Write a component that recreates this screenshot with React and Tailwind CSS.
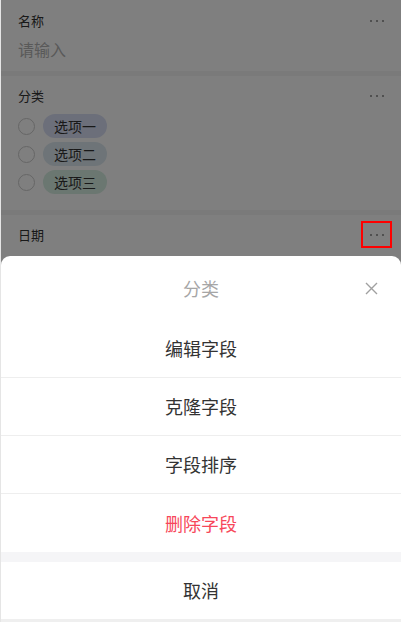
import React from "react";

function Dots({ boxed }) {
  return (
    <div className="relative flex h-[27px] w-[31px] items-center justify-center gap-[4px]">
      <span className="h-[2px] w-[2px] bg-[#a0a0a0]" />
      <span className="h-[2px] w-[2px] bg-[#a0a0a0]" />
      <span className="h-[2px] w-[2px] bg-[#a0a0a0]" />
      {boxed && <span className="absolute inset-0 z-30 border-2 border-[#ff0000]" />}
    </div>
  );
}

function Option({ label, color }) {
  return (
    <div className="flex h-[24px] items-center gap-[8px]">
      <span className="h-[17px] w-[17px] rounded-full border border-[#cccccc] bg-white" />
      <span className={`flex h-[24px] items-center rounded-full px-[11px] text-[14px] text-[#333] ${color}`}>
        {label}
      </span>
    </div>
  );
}

function Row({ children, red, border = true, h = "h-[58px]" }) {
  return (
    <div
      className={`flex ${h} items-center justify-center text-[18px] ${red ? "text-[#f7475a]" : "text-[#333]"} ${border ? "border-b border-[#eeeeee]" : ""}`}
    >
      {children}
    </div>
  );
}

export default function App() {
  return (
    <div
      className="relative h-[622px] w-[401px] overflow-hidden border-l border-[#e5e5e5] bg-[#f5f5f5]"
      style={{ fontFamily: '"Noto Sans CJK SC", "Noto Sans", sans-serif' }}
    >
      <div className="flex flex-col gap-[5px]">
        <div className="flex h-[71px] flex-col bg-white pl-[17px] pr-[9px] pt-[7px]">
          <div className="flex h-[27px] items-center justify-between">
            <span className="text-[13px] leading-[18px] text-[#333]">名称</span>
            <Dots />
          </div>
          <span className="mt-[3px] text-[16px] leading-[24px] text-[#b3b3b3]">请输入</span>
        </div>
        <div className="flex h-[134px] flex-col bg-white pl-[17px] pr-[9px] pt-[6px]">
          <div className="flex h-[27px] items-center justify-between">
            <span className="text-[13px] leading-[18px] text-[#333]">分类</span>
            <Dots />
          </div>
          <div className="mt-[5px] flex flex-col gap-[4px]">
            <Option label="选项一" color="bg-[#d9dff5]" />
            <Option label="选项二" color="bg-[#dde9f0]" />
            <Option label="选项三" color="bg-[#d6efe2]" />
          </div>
        </div>
        <div className="flex h-[200px] flex-col bg-white pl-[17px] pr-[9px] pt-[6px]">
          <div className="flex h-[27px] items-center justify-between">
            <span className="text-[13px] leading-[18px] text-[#333]">日期</span>
            <Dots boxed />
          </div>
          <span className="mt-[3px] text-[16px] leading-[24px] text-[#b3b3b3]">请选择</span>
        </div>
      </div>

      <div className="absolute inset-0 z-20 bg-black/50" />

      <div className="absolute bottom-0 left-0 right-0 z-40 flex flex-col overflow-hidden rounded-t-[9px] bg-white">
        <div className="relative flex h-[64px] items-center justify-center">
          <span className="text-[18px] text-[#a6a6a6]">分类</span>
          <svg
            className="absolute right-[23px] top-[26px]"
            width="13"
            height="13"
            viewBox="0 0 13 13"
            fill="none"
            stroke="#a0a0a0"
            strokeWidth="1.4"
          >
            <path d="M1 1L12 12M12 1L1 12" />
          </svg>
        </div>
        <Row>编辑字段</Row>
        <Row>克隆字段</Row>
        <Row>字段排序</Row>
        <Row red border={false}>删除字段</Row>
        <div className="h-[10px] bg-[#f5f5f7]" />
        <Row border={false} h="h-[57px]">取消</Row>
        <div className="h-[3px] bg-[#efefef]" />
      </div>
    </div>
  );
}
